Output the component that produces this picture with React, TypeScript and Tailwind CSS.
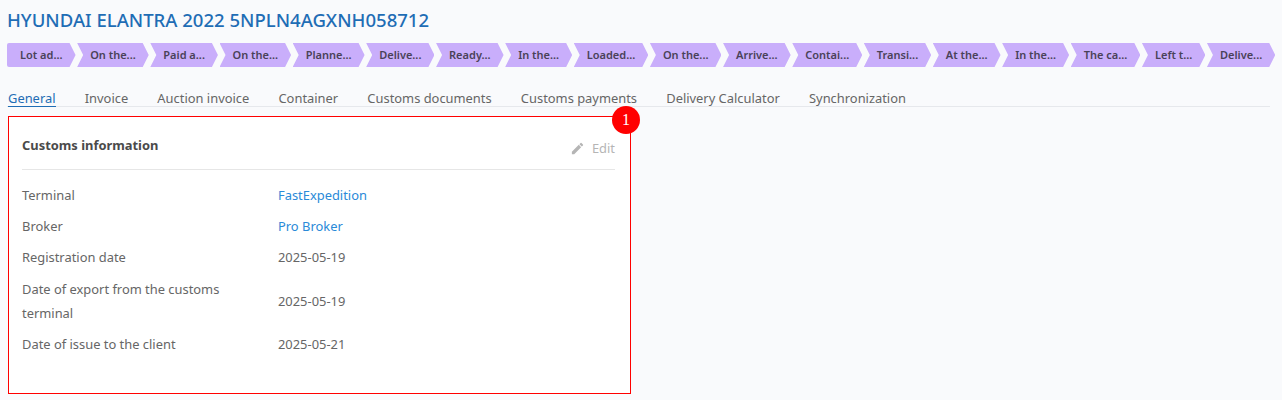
const steps = [
  "Lot ad...", "On the...", "Paid a...", "On the...", "Planne...", "Delive...", "Ready...", "In the...", "Loaded...",
  "On the...", "Arrive...", "Contai...", "Transi...", "At the...", "In the...", "The ca...", "Left t...", "Delive...",
];

const tabs = ["General", "Invoice", "Auction invoice", "Container", "Customs documents", "Customs payments", "Delivery Calculator", "Synchronization"];

function Row({ label, children, tall }: { label: string; children: React.ReactNode; tall?: boolean }) {
  return (
    <div className={tall ? "flex items-center py-[4px]" : "flex items-center pt-[3px] pb-[4px]"}>
      <div className="w-[256px] shrink-0 pr-10 leading-6">{label}</div>
      <div className="leading-6">{children}</div>
    </div>
  );
}

export default function App() {
  return (
    <div className="h-[400px] overflow-hidden bg-[#f9fafc] pl-[7px] pr-3 font-['Noto_Sans',sans-serif] text-[12.9px] text-[#666]">
      <h1 className="pt-[7px] text-[18.55px] leading-[25px] font-medium text-[#1f6db5]">HYUNDAI ELANTRA 2022 5NPLN4AGXNH058712</h1>

      <div className="mt-[11px] flex gap-[1.6px]">
        {steps.map((step, i) => (
          <div
            key={i}
            className={
              i === 0
                ? "flex h-[24px] items-center rounded-l-[2px] bg-[#c9aefb] px-[13px] text-[11px] font-semibold whitespace-nowrap text-[#4a4258] [clip-path:polygon(0_0,calc(100%-6px)_0,100%_50%,calc(100%-6px)_100%,0_100%)]"
                : "flex h-[24px] items-center bg-[#c9aefb] px-[13px] text-[11px] font-semibold whitespace-nowrap text-[#4a4258] [clip-path:polygon(0_0,calc(100%-6px)_0,100%_50%,calc(100%-6px)_100%,0_100%,6px_50%)]"
            }
          >
            {step}
          </div>
        ))}
      </div>

      <div className="mt-[20px] flex gap-[29.2px] border-b border-[#e6e8ec] pt-[3px] pl-px">
        {tabs.map((tab, i) => (
          <div key={tab} className={i === 0 ? "-mb-px border-b border-[#1f6db5] leading-[16px] text-[#1f6db5]" : "leading-[16px]"}>
            {tab}
          </div>
        ))}
      </div>

      <div className="relative mt-[9px] ml-px h-[278px] w-[623px] border border-[#f00] bg-white pr-[15px] pl-[13px]">
        <div className="absolute -top-[11px] -right-[10px] flex h-[28px] w-[28px] items-center justify-center rounded-full bg-[#f00] font-['Liberation_Serif',serif] text-[16px] text-white">
          1
        </div>
        <div className="flex h-[53px] items-start justify-between border-b border-[#e6e6e6] pt-[18px]">
          <div className="leading-[20px] font-bold text-[#4a4a4a]">Customs information</div>
          <div className="mt-[3px] flex items-center gap-[7px] leading-[20px] text-[#b5b5b5]">
            <svg width="15" height="15" viewBox="0 0 24 24" fill="currentColor">
              <path d="M3 17.25V21h3.75L17.81 9.94l-3.75-3.75L3 17.25zM20.71 7.04a1 1 0 000-1.41l-2.34-2.34a1 1 0 00-1.41 0l-1.83 1.83 3.75 3.75 1.83-1.83z" />
            </svg>
            Edit
          </div>
        </div>
        <div className="pt-[10px]">
          <Row label="Terminal"><span className="text-[#2a8ad8]">FastExpedition</span></Row>
          <Row label="Broker"><span className="text-[#2a8ad8]">Pro Broker</span></Row>
          <Row label="Registration date">2025-05-19</Row>
          <Row tall label="Date of export from the customs terminal">2025-05-19</Row>
          <Row label="Date of issue to the client">2025-05-21</Row>
        </div>
      </div>
    </div>
  );
}
